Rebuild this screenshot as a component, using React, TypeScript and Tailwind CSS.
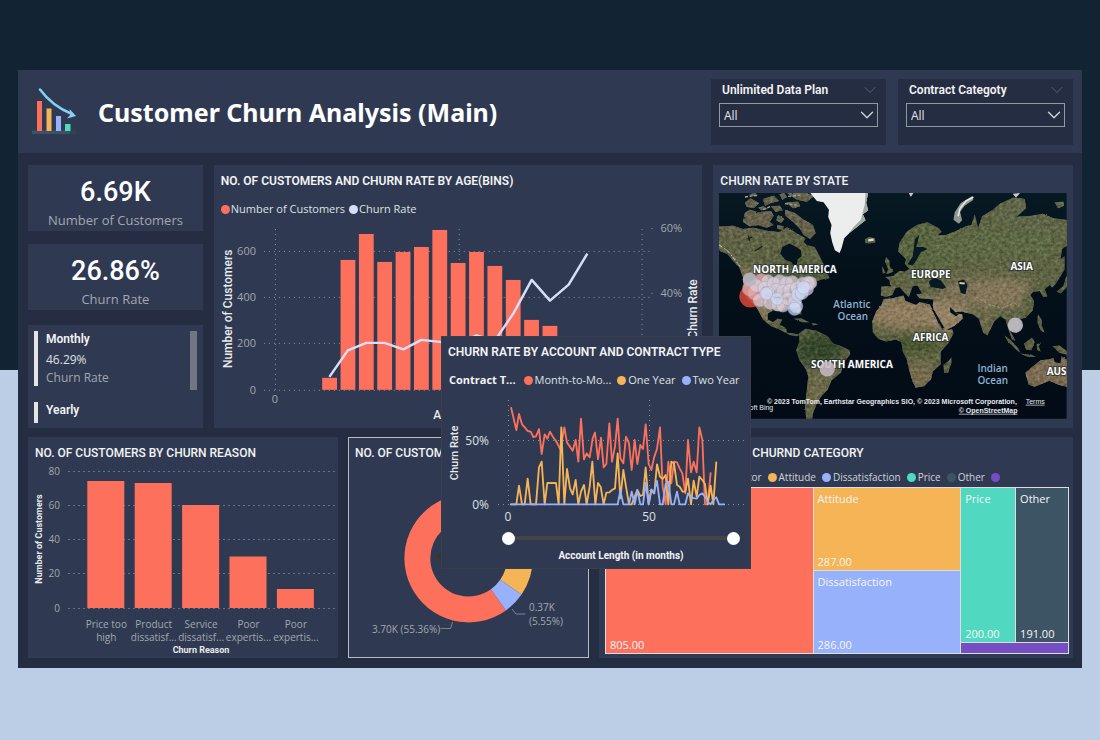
import { ChevronDown } from "lucide-react";
import type { ReactNode } from "react";

const din = "font-['Roboto',sans-serif]";

function Card({
  title,
  className = "",
  heading = "font-medium",
  children,
}: {
  title: string;
  className?: string;
  heading?: string;
  children: ReactNode;
}) {
  return (
    <section className={`flex min-w-0 flex-col bg-[#2f3a52] pt-2 ${className}`}>
      <h2
        className={`overflow-hidden px-[7px] font-['Roboto',sans-serif] text-[12px] leading-4 whitespace-nowrap text-[#f3f3f4] ${heading}`}
      >
        {title}
      </h2>
      {children}
    </section>
  );
}

function Slicer({ id, label }: { id: string; label: string }) {
  return (
    <div className="h-[66px] w-[175px] bg-[#252d42] px-2 pt-px">
      <div className="flex items-center justify-between pl-[3px]">
        <label htmlFor={id} className="font-['Roboto',sans-serif] text-[12px] leading-5 font-semibold text-[#f3f3f4]">
          {label}
        </label>
        <ChevronDown className="-mr-0.5 size-5 text-[#4d566b]" strokeWidth={1.25} />
      </div>
      <div className="relative mt-[3px]">
        <select
          id={id}
          className="block h-6 w-full appearance-none border border-[#9297a2] bg-transparent pt-0.5 pl-1 text-[12px] text-[#e4e4e6] outline-none"
        >
          <option>All</option>
        </select>
        <ChevronDown className="pointer-events-none absolute top-px right-0 size-[22px] text-[#d0d2d6]" strokeWidth={1.5} />
      </div>
    </div>
  );
}

function Kpi({ value, label }: { value: string; label: string }) {
  return (
    <div className="flex h-[66px] flex-col items-center bg-[#2f3a52] pt-[11px]">
      <span className="font-['Roboto',sans-serif] text-[27px] leading-8 font-medium text-white">{value}</span>
      <span className="mt-[2px] text-[13px] leading-5 text-[#a3a7ae]">{label}</span>
    </div>
  );
}

function Dot({ className }: { className: string }) {
  return <span className={`inline-block size-[9px] shrink-0 rounded-full ${className}`} />;
}

const grid = { stroke: "#8a909d", strokeWidth: 1, strokeDasharray: "1 4" };

const ageTops = [378, 260, 234, 262, 252, 247, 230, 263, 252, 266, 280, 320, 326];

function AgeChart() {
  return (
    <svg viewBox="214 217 489 204" className="block h-auto w-full" role="img" aria-label="Customers and churn rate by age">
      {[251.5, 297.5, 343.5, 390.5].map((y, i) => (
        <g key={y}>
          <line x1="264" x2="651" y1={y} y2={y} {...grid} />
          <text x="256" y={y + 4} textAnchor="end" fontSize="11" fill="#a3a7ae">
            {600 - i * 200}
          </text>
        </g>
      ))}
      {[275.5, 459.5, 642.5].map((x) => (
        <line key={x} x1={x} x2={x} y1="229" y2="390" {...grid} />
      ))}
      {ageTops.map((top, i) => (
        <rect key={i} x={322.3 + i * 18.38} y={top} width="14.8" height={390 - top} fill="#fd715c" />
      ))}
      <polyline
        points="329.5,377 348,350.5 366.5,343 384.7,343 403.5,349.5 421.6,340 440,342 458.5,345 476.7,335.5 495,341 514,313 532,280 550.3,300.7 569,284.7 587.7,253.7"
        fill="none"
        stroke="#d9def8"
        strokeWidth="2.5"
        strokeLinejoin="round"
      />
      <path d="M652 228.500h1M652 293.500h1" stroke="#8a909d" />
      <g fontSize="11" fill="#a3a7ae">
        <text x="661" y="232">60%</text>
        <text x="661" y="297">40%</text>
        <text x="275" y="403" textAnchor="middle">0</text>
      </g>
      <g className={din} fontSize="12" fontWeight="500" fill="#e9eaec" textAnchor="middle">
        <text transform="translate(232.500 309) rotate(-90)">Number of Customers</text>
        <text transform="translate(697 309) rotate(-90)">Churn Rate</text>
        <text x="461" y="419">Age (bins)</text>
      </g>
    </svg>
  );
}

const reasons = [
  { top: 481, a: "Price too", b: "high" },
  { top: 483, a: "Product", b: "dissatisf..." },
  { top: 505, a: "Service", b: "dissatisf..." },
  { top: 556.5, a: "Poor", b: "expertis..." },
  { top: 589, a: "Poor", b: "expertis..." },
];

function ReasonChart() {
  return (
    <svg viewBox="28 461 310 197" className="block h-auto w-full" role="img" aria-label="Customers by churn reason">
      {[471.5, 505.5, 539.5, 573.5, 608.5].map((y, i) => (
        <g key={y}>
          <line x1="68" x2="335" y1={y} y2={y} {...grid} strokeDasharray="2 3" stroke="#6a7284" />
          <text x="60" y={y + 3.5} textAnchor="end" fontSize="10" fill="#a3a7ae">
            {80 - i * 20}
          </text>
        </g>
      ))}
      {reasons.map((r, i) => (
        <g key={i}>
          <rect x={87.3 + i * 47.4} y={r.top} width="37" height={608 - r.top} fill="#fd715c" />
          <g fontSize="10" fill="#a3a7ae" textAnchor="middle">
            <text x={106.3 + i * 47.4} y="628">{r.a}</text>
            <text x={106.3 + i * 47.4} y="641">{r.b}</text>
          </g>
        </g>
      ))}
      <g className={din} fontWeight="700" fontSize="9" fill="#e9eaec" textAnchor="middle">
        <text transform="translate(42 539) rotate(-90)">Number of Customers</text>
        <text x="201" y="653">Churn Reason</text>
      </g>
    </svg>
  );
}

function slice(from: number, to: number) {
  const [cx, cy, r, q] = [468.6, 558.2, 64.2, 38.3];
  const p = (deg: number, rad: number) => {
    const t = (deg * Math.PI) / 180;
    return `${cx + rad * Math.sin(t)} ${cy - rad * Math.cos(t)}`;
  };
  const big = to - from > 180 ? 1 : 0;
  return `M${p(from, r)}A${r} ${r} 0 ${big} 1 ${p(to, r)}L${p(to, q)}A${q} ${q} 0 ${big} 0 ${p(from, q)}Z`;
}

function Donut() {
  return (
    <svg viewBox="348 461 241 196" className="block h-auto w-full" role="img" aria-label="Customers by contract">
      <path d={slice(144.4, 343.7)} fill="#fd715c" />
      <path d={slice(-16.3, 124.4)} fill="#f5b455" />
      <path d={slice(124.4, 144.4)} fill="#97b1fa" />
      <path d="M435 556.500l8-7v14z" fill="#363636" />
      <path d="M440.500 628.500h10l2-6.500M512 609l4 5h9.500" fill="none" stroke="#7c8390" />
      <g fontSize="10" fill="#a3a7ae">
        <text x="372" y="633">3.70K (55.36%)</text>
        <text x="529" y="611">0.37K</text>
        <text x="529" y="625">(5.55%)</text>
      </g>
    </svg>
  );
}

const bubbles: [number, number, number][] = [
  [150, 388, 22], [165, 400, 22], [185, 362, 20], [205, 365, 20], [170, 378, 20], [195, 385, 20], [222, 372, 20],
  [240, 365, 20], [260, 370, 20], [278, 368, 20], [230, 392, 20], [250, 395, 20], [270, 392, 20],
  [292, 385, 20], [310, 372, 20], [325, 370, 20], [332, 370, 20], [322, 388, 20], [180, 422, 20], [205, 400, 20],
  [212, 430, 20], [235, 435, 20], [250, 438, 20], [265, 418, 20], [285, 425, 20], [290, 440, 20], [285, 448, 20],
  [295, 405, 20], [307, 400, 20], [312, 384, 20], [232, 418, 19], [200, 402, 19],
];

const labels: [string, number, number][] = [
  ["NORTH AMERICA", 76, 80],
  ["EUROPE", 212, 85],
  ["ASIA", 303, 77],
  ["AFRICA", 212, 148],
  ["SOUTH AMERICA", 133, 175],
];

function WorldMap() {
  return (
    <svg viewBox="0 0 348 226" className="block h-auto w-full" role="img" aria-label="Churn rate by state map">
      <defs>
        <filter id="terrain" x="0" y="0" width="1" height="1" colorInterpolationFilters="sRGB">
          <feTurbulence type="fractalNoise" baseFrequency="0.16" numOctaves="3" seed="4" result="edge" />
          <feDisplacementMap in="SourceGraphic" in2="edge" scale="5" xChannelSelector="R" yChannelSelector="G" result="land" />
          <feTurbulence type="fractalNoise" baseFrequency="0.09 0.11" numOctaves="4" seed="9" />
          <feColorMatrix values="0.6 0 0 0 0.2  0.6 0 0 0 0.2  0.6 0 0 0 0.19  0 0 0 0 1" result="grain" />
          <feBlend in="grain" in2="land" mode="soft-light" result="lit" />
          <feComposite in="lit" in2="land" operator="in" />
        </filter>
        <filter id="soft" x="-0.3" y="-0.3" width="1.6" height="1.6">
          <feGaussianBlur stdDeviation="14" />
        </filter>
        <linearGradient id="sea" x1="0" y1="0" x2="0" y2="1">
          <stop offset="0" stopColor="#071923" />
          <stop offset="0.35" stopColor="#03101a" />
          <stop offset="1" stopColor="#020b16" />
        </linearGradient>
        <clipPath id="continents">
          <path d="M50 202L100 198 130 208 160 204 200 213 238 217 262 203 292 222 318 236 312 248 322 256 345 262 356 282 374 318 352 336 384 343 390 356 372 358 352 364 350 378 332 392 316 410 303 434 306 464 297 464 286 448 262 448 244 456 222 452 204 462 204 480 220 488 234 478 248 480 240 496 256 504 264 520 284 522 300 526 290 530 268 526 240 510 214 500 190 480 174 448 160 432 144 418 132 396 130 352 118 322 100 304 84 284 50 270Z" />
          <path d="M298 522L318 508 350 514 384 530 400 552 428 562 450 572 452 584 432 610 424 640 396 662 384 690 364 712 350 736 340 762 338 780 320 780 316 740 322 690 326 650 318 628 300 602 290 572 300 546Z" />
          <path d="M596 276L600 250 622 216 652 196 684 188 718 206 726 216 712 228 740 226 770 214 800 200 816 196 826 164 836 206 848 170 878 152 902 132 942 114 976 118 980 146 950 172 1000 168 1030 162 1062 176 1110 182 1110 254 1088 268 1084 298 1096 290 1096 330 1070 372 1058 384 1052 376 1036 388 1044 410 1032 412 1022 394 1002 396 992 406 1004 424 1000 452 980 474 958 480 964 500 952 520 940 506 934 516 948 544 938 540 926 506 918 480 902 470 884 486 864 528 852 520 838 478 820 464 786 456 768 458 750 440 756 460 788 464 790 478 766 498 736 514 722 498 702 450 700 436 702 420 660 416 650 404 668 402 654 378 640 380 628 412 616 400 600 382 588 386 578 406 560 412 544 408 546 380 572 380 570 362 558 352 578 350 600 334 616 336 630 328 616 312 620 300 612 290Z" />
          <path d="M552 418L580 416 612 408 618 424 650 436 660 428 690 434 704 460 716 490 730 512 758 510 762 522 746 552 724 576 724 614 700 636 694 660 674 680 650 684 640 668 628 628 622 600 610 576 606 548 590 540 560 546 536 538 520 518 518 486 530 456 546 436Z" />
          <path d="M734 640L732 616 748 604 756 594 756 610 746 640ZM550 342L548 320 558 340ZM560 344L566 328 556 306 560 292 570 304 570 320 582 336ZM496 240L508 232 526 236 528 248 512 252 498 250ZM978 640L1004 618 1024 602 1046 600 1062 596 1066 608 1084 612 1086 590 1110 606 1110 684 1078 676 1050 664 1006 682 988 676ZM1060 560L1080 558 1104 576 1104 586 1080 580ZM916 528L932 540 958 568 962 580 946 566 924 544ZM974 552L998 534 1006 548 996 572 980 570ZM962 582L996 586 1010 592 984 592ZM1016 466L1026 480 1028 500 1036 520 1024 512 1014 488ZM1012 554L1026 548 1018 560 1024 576 1014 572ZM1072 396L1092 380 1100 352 1110 350 1110 374 1084 402ZM282 478L304 476 330 488 308 488ZM336 490L356 494 340 498Z" />
          <path d="M130 186L136 160 150 150 176 158 214 154 222 168 210 186 222 196 200 204 176 196 150 200ZM136 130L152 116 178 130 164 144 142 142ZM190 118L222 108 238 124 214 130 196 138ZM176 144L192 140 204 148 186 152ZM214 140L240 138 250 152 228 156ZM256 150L286 160 312 180 340 196 348 220 332 238 312 226 300 206 280 186 258 168ZM260 128L296 126 302 140 280 146ZM262 100L316 98 342 110 322 126 292 120ZM236 166L254 178 244 190 230 182ZM232 196L252 200 250 210 234 208ZM290 236L306 236 298 248ZM240 104L254 100 262 112 248 120ZM148 104L168 100 170 112ZM1066 128L1092 126 1094 138 1076 146Z" />
        </clipPath>
      </defs>
      <rect width="348" height="226" fill="url(#sea)" />
      <g transform="scale(.33333) translate(-58 -100)">
        <g filter="url(#terrain)">
          <g clipPath="url(#continents)">
            <rect x="40" y="80" width="1080" height="720" fill="#5e6344" />
            <g filter="url(#soft)">
              <rect x="40" y="90" width="320" height="130" fill="#66624e" />
              <rect x="120" y="330" width="110" height="150" fill="#85775a" />
              <ellipse cx="280" cy="350" rx="90" ry="50" fill="#4f5a3b" />
              <ellipse cx="360" cy="570" rx="70" ry="50" fill="#34472a" />
              <ellipse cx="360" cy="690" rx="40" ry="60" fill="#6d6b4b" />
              <ellipse cx="630" cy="460" rx="130" ry="50" fill="#8f7c5f" />
              <ellipse cx="750" cy="470" rx="60" ry="50" fill="#968366" />
              <ellipse cx="640" cy="555" rx="80" ry="25" fill="#47552f" />
              <ellipse cx="660" cy="650" rx="55" ry="45" fill="#756b4e" />
              <ellipse cx="670" cy="270" rx="80" ry="70" fill="#58653f" />
              <rect x="700" y="210" width="370" height="90" fill="#5d6844" />
              <ellipse cx="830" cy="400" rx="110" ry="50" fill="#7c7156" />
              <ellipse cx="920" cy="400" rx="90" ry="45" fill="#84765a" />
              <ellipse cx="1020" cy="430" rx="50" ry="50" fill="#59613f" />
              <ellipse cx="860" cy="490" rx="30" ry="40" fill="#6b6849" />
              <ellipse cx="1050" cy="640" rx="80" ry="50" fill="#7d6c52" />
              <rect x="900" y="90" width="200" height="110" fill="#606648" />
            </g>
          </g>
        </g>
        <path d="M270 252L248 262 242 282 256 300 276 308 284 322 292 314 294 300 306 290 304 272 290 262Z" fill="#06141d" />
        <path d="M688 366L704 354 724 362 740 384 730 388 694 382ZM776 364L794 360 804 376 798 404 784 400ZM650 262L672 262 684 268 664 278 652 300 640 318 624 314 640 290 646 240 660 224 654 250Z" fill="#091923" />
        <path d="M696 448L704 452 734 504 728 508ZM752 446L770 462 780 462 770 470 752 458Z" fill="#04111e" />
        <path d="M332 100L506 98 500 130 506 152 490 164 498 182 472 202 452 218 434 236 426 266 420 280 406 272 398 248 392 220 396 196 386 172 388 150 372 128 352 124Z" fill="#eceeee" />
        <path d="M506 98L500 130 506 152 490 164 498 182 470 204 448 222 462 202 484 180 490 156 496 134 498 98Z" fill="#a3aba2" />
        <path d="M818 110L822 120 796 138 782 156 788 182 778 192 762 180 766 158 784 130Z" fill="#8f988f" />
        <path d="M822 112L800 124 782 146 776 170" fill="none" stroke="#e4e8e4" strokeWidth="5" />
        <path d="M940 102L962 100 950 114ZM628 100L642 100 634 112Z" fill="#c8ccc6" />
        <path d="M58 256L82 272 104 298 122 322" fill="none" stroke="#c4c8bf" strokeWidth="3" strokeDasharray="12 7 5 4" />
        <path d="M506 242L522 240" stroke="#d9dcd6" strokeWidth="7" />
        <path d="M136 112L174 106M190 150L214 140M256 132L290 136M266 110L304 106" stroke="#a0a79f" strokeWidth="4" strokeDasharray="9 5" />
        <path d="M780 370L796 372" stroke="#d7c696" strokeWidth="6" />
        <path d="M144 238L158 232M166 274L188 260M146 228L150 244" stroke="#182019" strokeWidth="4" />
        <path d="M830 412L872 436 908 446 944 430 960 440" fill="none" stroke="#a99c80" strokeWidth="3" strokeDasharray="8 6" />
      </g>
      <g fontSize="10" fontWeight="700" fill="#ffffff" stroke="#17202b" strokeWidth="2" paintOrder="stroke" strokeOpacity="0.6" textAnchor="middle">
        {labels.map(([t, x, y]) => (
          <text key={t} x={x} y={y}>{t}</text>
        ))}
        <text x="328" y="182" textAnchor="start">AUS</text>
      </g>
      <g fontSize="10" fontWeight="600" fill="#8fb2cf" textAnchor="middle">
        <text x="133" y="115">Atlantic</text>
        <text x="134" y="127">Ocean</text>
        <text x="274" y="179">Indian</text>
        <text x="274" y="191">Ocean</text>
      </g>
      <g transform="scale(.33333) translate(-58 -100)">
        <circle cx="152" cy="411" r="33" fill="#cf4435" fillOpacity="0.9" />
        {bubbles.map(([x, y, r], i) => (
          <circle
            key={i}
            cx={x}
            cy={y}
            r={r}
            fill={i < 3 ? "#e8aaa4" : i > 24 ? "#cfdaf5" : "#dccfdb"}
            fillOpacity="0.72"
            stroke="#8d94bb"
            strokeOpacity="0.55"
            strokeWidth="2"
          />
        ))}
        <circle cx="150" cy="360" r="21" fill="#b9b7c4" fillOpacity="0.85" />
        <circle cx="948" cy="497" r="23" fill="#c4bfcb" fillOpacity="0.9" />
        <circle cx="383" cy="628" r="23" fill="#c9bac8" fillOpacity="0.85" />
      </g>
      <g className="font-['Liberation_Sans',sans-serif]" fontSize="7" fill="#e6e8ea">
        <text x="48" y="211" fontWeight="700">© 2023 TomTom, Earthstar Geographics SIO, © 2023 Microsoft Corporation,</text>
        <text x="10" y="217">Microsoft Bing</text>
        <a href="#terms">
          <text x="307" y="211" textDecoration="underline">Terms</text>
        </a>
        <a href="#osm">
          <text x="240" y="220" fontWeight="700" textDecoration="underline">© OpenStreetMap</text>
        </a>
      </g>
    </svg>
  );
}

const thumb =
  "pointer-events-none absolute inset-0 h-4 w-full appearance-none bg-transparent [&::-webkit-slider-thumb]:pointer-events-auto [&::-webkit-slider-thumb]:size-[13px] [&::-webkit-slider-thumb]:appearance-none [&::-webkit-slider-thumb]:rounded-full [&::-webkit-slider-thumb]:bg-white";

function AccountPopup() {
  return (
    <Card
      title="CHURN RATE BY ACCOUNT AND CONTRACT TYPE"
      heading="font-semibold"
      className="absolute top-[266px] left-[423px] w-[310px] outline -outline-offset-1 outline-[#3b3f4a]"
    >
      <div className="mt-3 flex items-center px-2 text-[11px] leading-4 whitespace-nowrap text-[#dfe0e3]">
        <span className="mr-2 font-bold text-[#f3f3f4]">Contract T...</span>
        <Dot className="mr-0.5 bg-[#fd715c]" />
        Month-to-Mo...
        <Dot className="mr-0.5 ml-1.5 bg-[#f5b455]" />
        One Year
        <Dot className="mr-0.5 ml-1.5 bg-[#97b1fa]" />
        Two Year
      </div>
      <svg viewBox="441 388 310 141" className="block h-auto w-full" role="img" aria-label="Churn rate by account length">
        <path d="M498 440.500H744M498 504.500H744M508.500 400V504M649.500 400V504" {...grid} />
        <g transform="translate(436 330) scale(.33333)" fill="none" strokeWidth="5.500" strokeLinejoin="round">
          <polyline
            stroke="#fd715c"
            points="225,232 241,300 249,252 258,283 267,293 275,303 284,305 292,321 300,319 309,297 317,372 326,313 334,326 342,305 351,321 360,333 368,348 373,358 385,292 393,338 402,350 410,362 419,330 427,395 435,266 444,388 452,370 461,382 470,325 477,308 486,388 495,323 503,412 511,402 520,280 528,395 537,350 545,266 553,385 562,400 570,320 579,340 587,420 596,330 604,402 613,345 621,357 629,283 638,402 646,420 655,380 663,357 672,292 680,470 689,523 697,395 706,460 714,395 723,397 731,415 739,430 748,490 756,330 765,427 773,395 782,427 790,292 799,330 807,523 815,523 824,427"
          />
          <polyline
            stroke="#f5b455"
            points="225,523 241,523 249,467 258,523 266,523 275,446 284,523 300,523 309,412 317,395 326,523 334,459 360,459 368,523 376,292 385,523 393,417 402,475 410,493 419,450 427,523 435,485 444,465 452,523 461,470 469,395 478,523 486,459 494,470 503,523 511,488 520,487 528,480 537,475 545,370 553,505 562,420 570,470 579,523 587,523 596,500 604,480 613,498 621,495 629,412 638,523 646,480 655,490 663,403 672,440 680,447 689,435 697,523 706,395 714,400 723,465 731,470 740,485 748,485 756,446 765,523 773,452 782,500 790,440 799,450 807,462 815,523 824,467 832,523 841,395"
          />
          <polyline
            stroke="#97b1fa"
            points="222,523 545,523 553,482 562,523 579,523 587,485 596,523 604,480 613,523 621,523 629,459 638,523 646,478 653,490 663,453 672,523 680,523 689,462 697,455 706,523 714,523 723,485 731,523 748,523 756,490 765,503 782,506 790,495 799,490 807,500 815,515 824,523 832,510 841,502 849,523 867,523"
          />
        </g>
        <g fontSize="12" fill="#dfe0e3">
          <text x="489" y="445" textAnchor="end">50%</text>
          <text x="489" y="509" textAnchor="end">0%</text>
          <text x="508" y="521" textAnchor="middle">0</text>
          <text x="649" y="521" textAnchor="middle">50</text>
        </g>
        <text className={din} transform="translate(458 453) rotate(-90)" fontSize="11" fontWeight="500" fill="#e9eaec" textAnchor="middle">
          Churn Rate
        </text>
      </svg>
      <div className="relative mt-px mr-[11px] ml-[61px] h-4">
        <div className="mx-1.5 h-4 py-[6px]">
          <div className="h-1 bg-[#454545]" />
        </div>
        <input type="range" aria-label="Minimum account length" min="0" max="80" defaultValue="0" className={thumb} />
        <input type="range" aria-label="Maximum account length" min="0" max="80" defaultValue="80" className={thumb} />
      </div>
      <p className="mt-0.5 mb-[5px] ml-[50px] text-center font-['Roboto',sans-serif] text-[10px] leading-4 font-bold text-[#f3f3f4]">
        Account Length (in months)
      </p>
    </Card>
  );
}

const tile = "flex min-h-0 min-w-0 flex-col justify-between overflow-hidden px-1 pt-[3px] text-[11px] leading-4 text-[#f6f6f6]";

export default function App() {
  return (
    <div className="min-h-screen bg-[linear-gradient(to_bottom,#122333_50%,#bccee5_50%)] px-[18px] pt-[70px] font-['Open_Sans','Noto_Sans',sans-serif]">
      <main className="relative bg-[#252d42]">
        <header className="flex h-[83px] items-center bg-[#2f3a52] pr-[9px] pl-[14px]">
          <svg viewBox="0 0 44 48" className="h-12 w-11" aria-hidden="true">
            <rect x="0" y="42.500" width="38" height="3.500" fill="#3c5162" />
            <rect x="38" y="42.500" width="6" height="3.500" fill="#28484f" />
            <rect x="5" y="13" width="5" height="30" fill="#fd715c" />
            <rect x="14.500" y="20.500" width="5" height="22.500" fill="#f5b455" />
            <rect x="24" y="28" width="5" height="15" fill="#97b1fa" />
            <rect x="33" y="36" width="5.500" height="7" fill="#50d9c0" />
            <path d="M8 1.500C15 11 25 20 40 26" fill="none" stroke="#85d0f5" strokeWidth="2.500" strokeLinecap="round" />
            <path d="M37.500 21L44 28 35 30.500 38.500 26.500Z" fill="#85d0f5" />
          </svg>
          <h1 className="ml-[22px] font-['Noto_Sans',sans-serif] text-[25px] leading-8 font-bold text-white">
            Customer Churn Analysis (Main)
          </h1>
          <div className="ml-auto flex gap-3">
            <Slicer id="data-plan" label="Unlimited Data Plan" />
            <Slicer id="contract-category" label="Contract Categoty" />
          </div>
        </header>

        <div className="flex flex-col gap-[9px] pt-3 pr-[9px] pb-[10px] pl-[10px]">
          <div className="grid grid-cols-[175fr_489fr_360fr] gap-[11px]">
            <div className="flex flex-col gap-[13px]">
              <Kpi value="6.69K" label="Number of Customers" />
              <Kpi value="26.86%" label="Churn Rate" />
              <div className="mt-[2px] flex h-[103px] justify-between bg-[#2f3a52] px-1.5 pt-1.5">
                <div>
                  <div className="h-[55px] border-l-4 border-[#e4e4e6] pl-2">
                    <p className="font-['Roboto',sans-serif] text-[12px] leading-4 font-semibold text-[#f3f3f4]">Monthly</p>
                    <p className="mt-1 text-[12px] leading-[18px] text-[#dfe0e3]">46.29%</p>
                    <p className="text-[12px] leading-[18px] text-[#a3a7ae]">Churn Rate</p>
                  </div>
                  <div className="mt-4 h-[21px] border-l-4 border-[#e4e4e6] pl-2">
                    <p className="font-['Roboto',sans-serif] text-[12px] leading-4 font-semibold text-[#f3f3f4]">Yearly</p>
                  </div>
                </div>
                <div className="h-[59px] w-[7px] bg-[#707684]" />
              </div>
            </div>

            <Card title="NO. OF CUSTOMERS AND CHURN RATE BY AGE(BINS)" heading="font-semibold">
              <div className="mt-3 flex items-center px-[7px] text-[11px] leading-4 text-[#dfe0e3]">
                <Dot className="mr-px bg-[#fd715c]" />
                Number of Customers
                <Dot className="mr-px ml-1 bg-[#d9def8]" />
                Churn Rate
              </div>
              <AgeChart />
            </Card>

            <Card title="CHURN RATE BY STATE">
              <div className="mt-1 px-1.5">
                <WorldMap />
              </div>
            </Card>
          </div>

          <div className="grid grid-cols-[310fr_241fr_474fr] gap-[10px]">
            <Card title="NO. OF CUSTOMERS BY CHURN REASON">
              <ReasonChart />
            </Card>
            <Card title="NO. OF CUSTOMERS BY CONTRACT" className="outline -outline-offset-1 outline-[#b9bcc3]">
              <Donut />
            </Card>
            <Card title="NO. OF CUSTOMERS WITH CHURND CATEGORY">
              <div className="mt-2 flex items-center px-[7px] text-[10px] leading-4 whitespace-nowrap text-[#d0d2d6]">
                <span className="mr-4 font-semibold">Churn Category</span>
                <Dot className="mr-0.5 bg-[#fd715c]" />
                Competitor
                <Dot className="mr-0.5 ml-1.5 bg-[#f5b455]" />
                Attitude
                <Dot className="mr-0.5 ml-1.5 bg-[#97b1fa]" />
                Dissatisfaction
                <Dot className="mr-0.5 ml-1.5 bg-[#50d9c0]" />
                Price
                <Dot className="mr-0.5 ml-1.5 bg-[#3d5465]" />
                Other
                <Dot className="ml-1.5 bg-[#744ec2]" />
              </div>
              <div className="mt-0.5 mr-1 mb-1 ml-1.5 grid flex-1 grid-cols-[207fr_147fr_107fr] gap-px border border-[#dcdde0] bg-[#dcdde0]">
                <div className={`bg-[#fd715c] ${tile}`}>
                  <span>Competitor</span>
                  <span>805.00</span>
                </div>
                <div className="grid grid-rows-2 gap-px">
                  <div className={`bg-[#f5b455] ${tile}`}>
                    <span>Attitude</span>
                    <span>287.00</span>
                  </div>
                  <div className={`bg-[#97b1fa] ${tile}`}>
                    <span>Dissatisfaction</span>
                    <span>286.00</span>
                  </div>
                </div>
                <div className="grid grid-rows-[1fr_10px] gap-px">
                  <div className="grid grid-cols-[54fr_52fr] gap-px">
                    <div className={`bg-[#50d9c0] ${tile}`}>
                      <span>Price</span>
                      <span>200.00</span>
                    </div>
                    <div className={`bg-[#3d5465] ${tile}`}>
                      <span>Other</span>
                      <span>191.00</span>
                    </div>
                  </div>
                  <div className="bg-[#744ec2]" />
                </div>
              </div>
            </Card>
          </div>
        </div>

        <AccountPopup />
      </main>
    </div>
  );
}
